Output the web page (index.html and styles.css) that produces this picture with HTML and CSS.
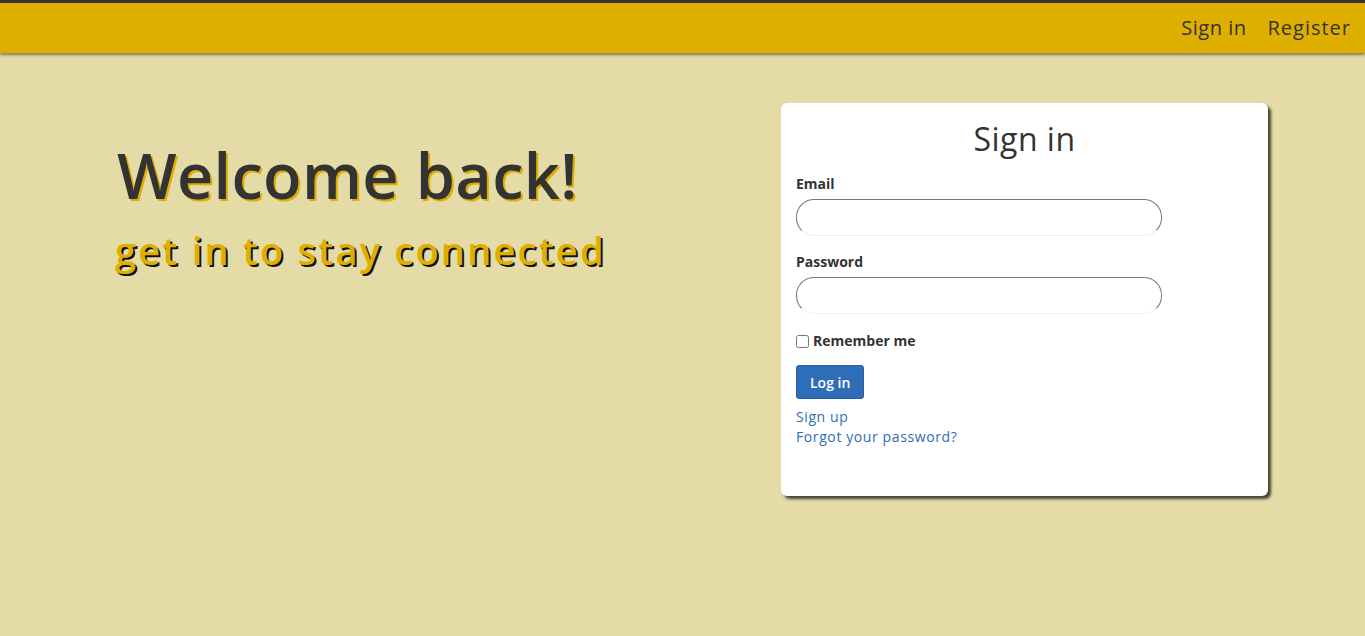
FILE: index.html
```html
<!DOCTYPE html>
<html lang="en">
<head>
<meta charset="utf-8">
<title>Sign in</title>
<link rel="stylesheet" href="styles.css">
</head>
<body>
<header class="topbar">
  <nav class="nav">
    <a class="nav-link" href="#">Sign in</a>
    <a class="nav-link nav-link-wide" href="#">Register</a>
  </nav>
</header>
<main class="main">
  <section class="hero">
    <h1 class="hero-title">Welcome back!</h1>
    <p class="hero-sub">get in to stay connected</p>
  </section>
  <section class="card">
    <h2 class="card-title">Sign in</h2>
    <form class="form">
      <label class="label" for="email">Email</label>
      <input class="input" id="email" type="email" autofocus>
      <label class="label label-pw" for="pw">Password</label>
      <input class="input" id="pw" type="password">
      <div class="remember">
        <input class="check" id="rm" type="checkbox">
        <label class="label-inline" for="rm">Remember me</label>
      </div>
      <button class="btn" type="button">Log in</button>
      <div class="links">
        <a class="link" href="#">Sign up</a>
        <a class="link" href="#">Forgot your password?</a>
      </div>
    </form>
  </section>
</main>
</body>
</html>
```
FILE: styles.css
```css
* { box-sizing: border-box; }
html, body { margin: 0; padding: 0; }
body {
  background: #e4dba7;
  font-family: "Open Sans", "Noto Sans", sans-serif;
  color: #333;
  height: 636px;
  overflow: hidden;
}
.topbar {
  border-top: 3px solid #333;
  background: #dfaf00;
  height: 53px;
  box-shadow: 0 2px 3px rgba(0,0,0,0.45);
  position: relative;
  z-index: 1;
}
.nav {
  display: flex;
  justify-content: flex-end;
  align-items: center;
  height: 49px;
  gap: 21px;
  padding-right: 14px;
}
.nav-link {
  color: #333;
  text-decoration: none;
  font-size: 20px;
  letter-spacing: 0.5px;
}
.nav-link-wide { letter-spacing: 1px; }
.main {
  display: flex;
  justify-content: space-between;
  align-items: flex-start;
  padding: 50px 97px 0 115px;
}
.hero { padding-top: 32px; }
.hero-title {
  margin: 0;
  font-size: 63px;
  font-weight: 600;
  letter-spacing: 0.35px;
  line-height: 80px;
  color: #333;
  text-shadow: 2px 2px 0 #dfaf00;
  padding-left: 2px;
}
.hero-sub {
  margin: 10px 0 0;
  font-size: 38px;
  font-weight: 600;
  letter-spacing: 2.2px;
  line-height: 50px;
  color: #dfaf00;
  text-shadow: 2px 2px 0 #111;
}
.card {
  width: 487px;
  height: 393px;
  background: #fff;
  border-radius: 6px;
  box-shadow: 3px 3px 3px rgba(0,0,0,0.7);
  padding: 14px 15px;
}
.card-title {
  margin: 0;
  text-align: center;
  font-size: 32px;
  font-weight: 500;
  line-height: 44px;
  color: #333;
  letter-spacing: 0.5px;
}
.form {
  display: flex;
  flex-direction: column;
  align-items: flex-start;
}
.label {
  font-size: 14px;
  font-weight: 700;
  margin-top: 13px;
  line-height: 20px;
  margin-bottom: 5px;
}
.label-pw { margin-top: 16px; }
.input {
  width: 366px;
  height: 37px;
  border: 1px solid #777;
  border-bottom-color: #f0f0f0;
  border-radius: 18px;
  padding: 0 10px;
  font-size: 14px;
  outline: none;
  background: #fff;
}
.remember {
  display: flex;
  align-items: center;
  margin-top: 17px;
}
.check {
  margin: 0 4px 0 0;
  width: 13px;
  height: 13px;
}
.label-inline {
  font-size: 14px;
  font-weight: 700;
  line-height: 20px;
}
.btn {
  margin-top: 14px;
  background: #2f6db8;
  border: 1px solid #2a5fa3;
  border-radius: 3px;
  color: #fff;
  font-family: inherit;
  font-size: 14px;
  font-weight: 600;
  height: 34px;
  padding: 0 13px;
}
.links {
  display: flex;
  flex-direction: column;
  margin-top: 8px;
}
.link {
  color: #2f6db8;
  text-decoration: none;
  font-size: 14px;
  line-height: 20px;
  letter-spacing: 0.6px;
}
```
